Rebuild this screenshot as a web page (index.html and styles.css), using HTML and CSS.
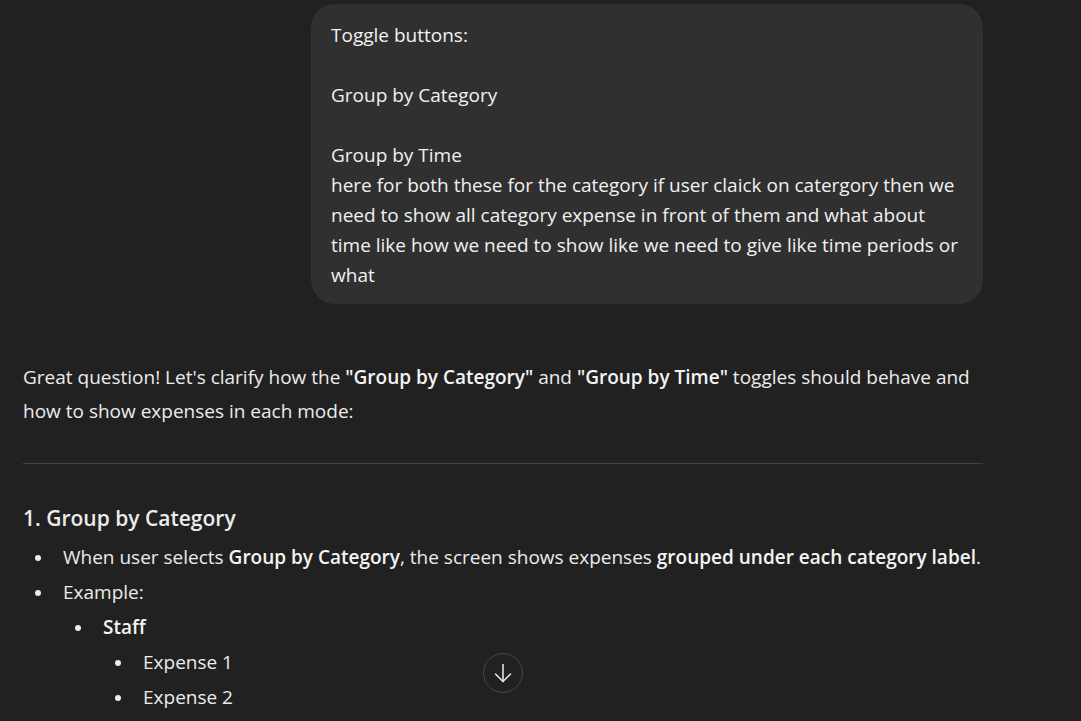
FILE: index.html
```html
<!DOCTYPE html>
<html>
<head>
<meta charset="utf-8">
<link rel="stylesheet" href="styles.css">
</head>
<body>
<main class="thread">
  <div class="user-row">
    <div class="bubble">Toggle buttons:

Group by Category

Group by Time
here for both these for the category if user claick on catergory then we need to show all category expense in front of them and what about time like how we need to show like we need to give like time periods or what</div>
  </div>
  <article class="answer">
    <p class="intro">Great question! Let's clarify how the <strong>"Group by Category"</strong> and <strong>"Group by Time"</strong> toggles should behave and how to show expenses in each mode:</p>
    <hr class="rule">
    <h3 class="heading">1. Group by Category</h3>
    <ul class="list">
      <li class="item"><span>When user selects <strong>Group by Category</strong>, the screen shows expenses <strong>grouped under each category label</strong>.</span></li>
      <li class="item"><span>Example:</span></li>
    </ul>
    <ul class="list sub">
      <li class="item"><span><strong>Staff</strong></span></li>
    </ul>
    <ul class="list subsub">
      <li class="item"><span>Expense 1</span></li>
      <li class="item"><span>Expense 2</span></li>
    </ul>
  </article>
</main>
<button class="scroll-down" aria-label="Scroll down">
  <svg width="20" height="20" viewBox="0 0 20 20" fill="none" stroke="#ececec" stroke-width="1.5" stroke-linecap="round" stroke-linejoin="round">
    <path d="M10 1.5V18.5"/>
    <path d="M2.5 11L10 18.5L17.5 11"/>
  </svg>
</button>
</body>
</html>
```
FILE: styles.css
```css
html, body {
  margin: 0;
  padding: 0;
  background: #212121;
  height: 100%;
  overflow: hidden;
}
body {
  font-family: "Open Sans", "Noto Sans", sans-serif;
  color: #ececec;
  font-size: 19px;
}
.thread {
  width: 960px;
  margin-left: 23px;
  padding-top: 4px;
}
.user-row {
  display: flex;
  justify-content: flex-end;
}
.bubble {
  width: 632px;
  background: #303030;
  border-radius: 24px;
  padding: 16px 20px 14px 20px;
  white-space: pre-wrap;
  line-height: 30px;
  font-size: 19px;
  color: #f1f1f1;
}
.answer {
  margin-top: 56px;
}
.intro {
  margin: 0;
  line-height: 34px;
  font-size: 19px;
}
strong {
  font-weight: 600;
  color: #f4f4f4;
}
.rule {
  border: none;
  border-top: 1px solid #424242;
  margin: 35px 0 0 0;
  height: 0;
}
.heading {
  margin: 39px 0 0 0;
  font-size: 21px;
  font-weight: 600;
  line-height: 30px;
}
.list {
  list-style: none;
  margin: 0;
  padding: 0;
}
.heading + .list {
  margin-top: 7px;
}
.list.sub {
  margin-left: 40px;
}
.list.subsub {
  margin-left: 80px;
}
.item {
  display: flex;
  line-height: 35px;
  font-size: 19px;
}
.item::before {
  content: "";
  flex: none;
  width: 6px;
  height: 6px;
  border-radius: 50%;
  background: #ececec;
  margin: 14.5px 22px 0 12px;
}
.scroll-down {
  position: absolute;
  left: 483px;
  top: 653px;
  width: 40px;
  height: 40px;
  box-sizing: border-box;
  border-radius: 50%;
  border: 1px solid #474747;
  background: #212121;
  display: flex;
  align-items: center;
  justify-content: center;
  padding: 0;
}
```
